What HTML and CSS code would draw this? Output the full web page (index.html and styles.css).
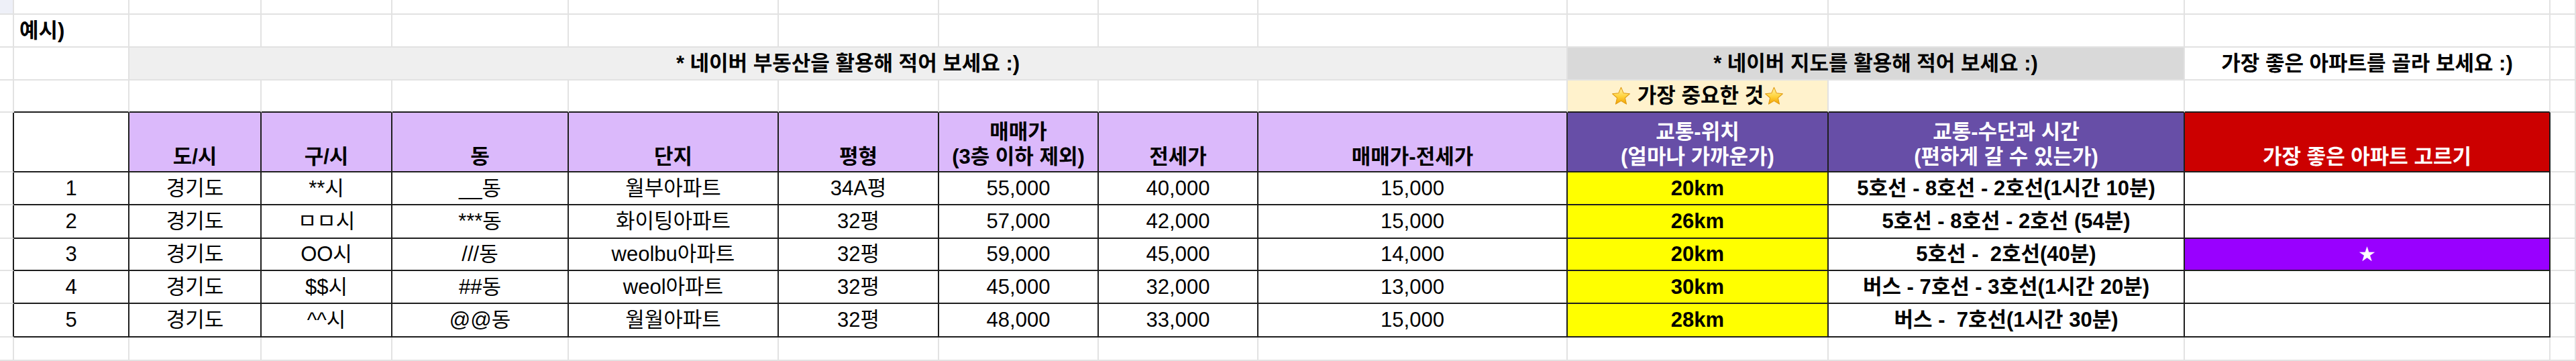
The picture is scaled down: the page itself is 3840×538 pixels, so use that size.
FILE: index.html
```html
<!DOCTYPE html>
<html lang="ko">
<head>
<meta charset="utf-8">
<title>아파트 비교 예시</title>
<link rel="stylesheet" href="styles.css">
</head>
<body>
<div class="sheet">
  <!-- row 0 -->
  <div class="c corner"></div><div class="c"></div><div class="c"></div><div class="c"></div><div class="c"></div><div class="c"></div><div class="c"></div><div class="c"></div><div class="c"></div><div class="c"></div><div class="c"></div><div class="c"></div><div class="c"></div><div class="c"></div>

  <!-- row 1 -->
  <div class="c"></div><div class="c left b">예시)</div><div class="c"></div><div class="c"></div><div class="c"></div><div class="c"></div><div class="c"></div><div class="c"></div><div class="c"></div><div class="c"></div><div class="c"></div><div class="c"></div><div class="c"></div><div class="c"></div>

  <!-- row 2 -->
  <div class="c"></div><div class="c"></div>
  <div class="c b band1 span-bi">* 네이버 부동산을 활용해 적어 보세요 :)</div>
  <div class="c b band2 span-jk">* 네이버 지도를 활용해 적어 보세요 :)</div>
  <div class="c b">가장 좋은 아파트를 골라 보세요 :)</div>
  <div class="c"></div>

  <!-- row 3 -->
  <div class="c"></div>
  <div class="c top"></div><div class="c top"></div><div class="c top"></div><div class="c top"></div><div class="c top"></div><div class="c top"></div><div class="c top"></div><div class="c top"></div><div class="c top"></div>
  <div class="c top b note"><svg class="star star-first" viewBox="0 0 24 24"><defs><linearGradient id="g1" x1="0" y1="0" x2="0" y2="1"><stop offset="0" stop-color="#fff3a8"/><stop offset="0.55" stop-color="#ffd23a"/><stop offset="1" stop-color="#f0a000"/></linearGradient></defs><polygon points="12,1.8 14.9,8.4 22,9.1 16.6,13.9 18.2,21 12,17.3 5.8,21 7.4,13.9 2,9.1 9.1,8.4" fill="url(#g1)" stroke="#e09a10" stroke-width="0.8" stroke-linejoin="round"/></svg><span>가장 중요한 것</span><svg class="star" viewBox="0 0 24 24"><polygon points="12,1.8 14.9,8.4 22,9.1 16.6,13.9 18.2,21 12,17.3 5.8,21 7.4,13.9 2,9.1 9.1,8.4" fill="url(#g1)" stroke="#e09a10" stroke-width="0.8" stroke-linejoin="round"/></svg></div>
  <div class="c top"></div><div class="c top"></div>
  <div class="c"></div>

  <!-- row 4: header -->
  <div class="c edge"></div>
  <div class="c t hd"></div>
  <div class="c t hd lav b">도/시</div>
  <div class="c t hd lav b">구/시</div>
  <div class="c t hd lav b">동</div>
  <div class="c t hd lav b">단지</div>
  <div class="c t hd lav b">평형</div>
  <div class="c t hd lav b">매매가<br>(3층 이하 제외)</div>
  <div class="c t hd lav b">전세가</div>
  <div class="c t hd lav b">매매가-전세가</div>
  <div class="c t hd dpur b">교통-위치<br>(얼마나 가까운가)</div>
  <div class="c t hd dpur b">교통-수단과 시간<br>(편하게 갈 수 있는가)</div>
  <div class="c t hd red b">가장 좋은 아파트 고르기</div>
  <div class="c"></div>

  <!-- row 5 -->
  <div class="c edge"></div>
  <div class="c t">1</div><div class="c t">경기도</div><div class="c t">**시</div><div class="c t">__동</div><div class="c t">월부아파트</div><div class="c t">34A평</div><div class="c t">55,000</div><div class="c t">40,000</div><div class="c t">15,000</div><div class="c t yel b">20km</div><div class="c t b">5호선 - 8호선 - 2호선(1시간 10분)</div><div class="c t"></div>
  <div class="c"></div>

  <!-- row 6 -->
  <div class="c edge"></div>
  <div class="c t">2</div><div class="c t">경기도</div><div class="c t">ㅁㅁ시</div><div class="c t">***동</div><div class="c t">화이팅아파트</div><div class="c t">32평</div><div class="c t">57,000</div><div class="c t">42,000</div><div class="c t">15,000</div><div class="c t yel b">26km</div><div class="c t b">5호선 - 8호선 - 2호선 (54분)</div><div class="c t"></div>
  <div class="c"></div>

  <!-- row 7 -->
  <div class="c edge"></div>
  <div class="c t">3</div><div class="c t">경기도</div><div class="c t">OO시</div><div class="c t">///동</div><div class="c t">weolbu아파트</div><div class="c t">32평</div><div class="c t">59,000</div><div class="c t">45,000</div><div class="c t">14,000</div><div class="c t yel b">20km</div><div class="c t b">5호선 -  2호선(40분)</div><div class="c t pick"><span class="pickstar">★</span></div>
  <div class="c"></div>

  <!-- row 8 -->
  <div class="c edge"></div>
  <div class="c t">4</div><div class="c t">경기도</div><div class="c t">$$시</div><div class="c t">##동</div><div class="c t">weol아파트</div><div class="c t">32평</div><div class="c t">45,000</div><div class="c t">32,000</div><div class="c t">13,000</div><div class="c t yel b">30km</div><div class="c t b">버스 - 7호선 - 3호선(1시간 20분)</div><div class="c t"></div>
  <div class="c"></div>

  <!-- row 9 -->
  <div class="c edge"></div>
  <div class="c t">5</div><div class="c t">경기도</div><div class="c t">^^시</div><div class="c t">@@동</div><div class="c t">월월아파트</div><div class="c t">32평</div><div class="c t">48,000</div><div class="c t">33,000</div><div class="c t">15,000</div><div class="c t yel b">28km</div><div class="c t b">버스 -  7호선(1시간 30분)</div><div class="c t"></div>
  <div class="c"></div>

  <!-- row 10 -->
  <div class="c"></div><div class="c"></div><div class="c"></div><div class="c"></div><div class="c"></div><div class="c"></div><div class="c"></div><div class="c"></div><div class="c"></div><div class="c"></div><div class="c"></div><div class="c"></div><div class="c"></div><div class="c"></div>
</div>
</body>
</html>
```

FILE: styles.css
```css
html, body {
  margin: 0;
  padding: 0;
  background: #ffffff;
}

body {
  font-family: "Liberation Sans", "Noto Sans CJK KR", sans-serif;
  font-size: 31px;
  color: #000;
}

.sheet {
  display: grid;
  grid-template-columns: 21px 172px 197px 195px 263px 313px 239px 238px 238px 461px 389px 531px 545px 38px;
  grid-template-rows: 22px 49px 49px 48px 89px 49px 50px 48px 49px 50px 35px;
  width: 3840px;
  height: 538px;
  overflow: hidden;
}

.c {
  box-sizing: border-box;
  border-right: 2px solid #e2e2e2;
  border-bottom: 2px solid #e2e2e2;
  display: flex;
  align-items: center;
  justify-content: center;
  text-align: center;
  white-space: pre;
  line-height: 1.2;
  min-width: 0;
}

.corner {
  background: #eef0f8;
}

.left {
  justify-content: flex-start;
  padding-left: 8px;
}

.b {
  font-weight: bold;
}

.band1 {
  background: #efefef;
}

.band2 {
  background: #d9d9d9;
}

.span-bi {
  grid-column: span 8;
}

.span-jk {
  grid-column: span 2;
}

.top {
  border-bottom: 2px solid #1e1e1e;
}

.note {
  background: #fff2cc;
}

.star {
  width: 31px;
  height: 31px;
  flex: none;
}

.star-first {
  margin-right: 9px;
}

.edge {
  border-right: 2px solid #1e1e1e;
}

.t {
  border-right: 2px solid #1e1e1e;
  border-bottom: 2px solid #1e1e1e;
}

.hd {
  align-items: flex-end;
  padding-bottom: 3px;
}

.lav {
  background: #dbb9fb;
}

.dpur {
  background: #674ea7;
  color: #ffffff;
}

.red {
  background: #cc0000;
  color: #ffffff;
}

.yel {
  background: #ffff00;
}

.pick {
  background: #9900ff;
  color: #ffffff;
}

.pickstar {
  font-family: "DejaVu Sans", sans-serif;
  font-size: 30px;
}
```
